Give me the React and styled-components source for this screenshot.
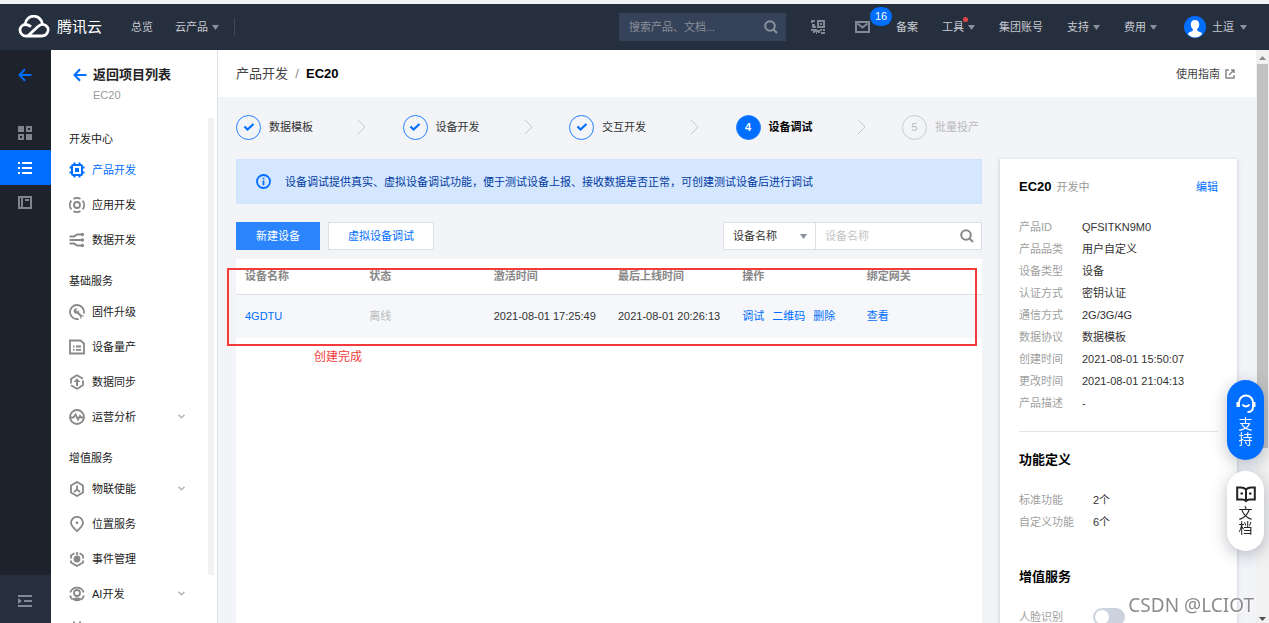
import styled, { createGlobalStyle } from "styled-components";

const steps = [
  { label: "数据模板", state: "done" },
  { label: "设备开发", state: "done" },
  { label: "交互开发", state: "done" },
  { label: "设备调试", state: "active" },
  { label: "批量投产", state: "todo" },
];

const menu = [
  {
    title: "开发中心",
    items: [
      { label: "产品开发", icon: "chip", active: true },
      { label: "应用开发", icon: "app" },
      { label: "数据开发", icon: "flow" },
    ],
  },
  {
    title: "基础服务",
    items: [
      { label: "固件升级", icon: "wrench" },
      { label: "设备量产", icon: "list" },
      { label: "数据同步", icon: "sync" },
      { label: "运营分析", icon: "pulse", more: true },
    ],
  },
  {
    title: "增值服务",
    items: [
      { label: "物联使能", icon: "hex", more: true },
      { label: "位置服务", icon: "pin" },
      { label: "事件管理", icon: "event" },
      { label: "AI开发", icon: "ai", more: true },
      { label: "工作空间", icon: "work" },
    ],
  },
];

const info = [
  ["产品ID", "QFSITKN9M0"],
  ["产品品类", "用户自定义"],
  ["设备类型", "设备"],
  ["认证方式", "密钥认证"],
  ["通信方式", "2G/3G/4G"],
  ["数据协议", "数据模板"],
  ["创建时间", "2021-08-01 15:50:07"],
  ["更改时间", "2021-08-01 21:04:13"],
  ["产品描述", "-"],
];

const icons = {
  chip: (
    <>
      <rect x="3" y="3" width="10" height="10" rx="1" strokeWidth="2" />
      <path d="M5.5 0.5V3M10.5 0.5V3M5.5 13v2.5M10.5 13v2.5M0.5 5.5H3M0.5 10.5H3M13 5.5h2.5M13 10.5h2.5" strokeWidth="2" />
      <rect x="6" y="6" width="4" height="4" fill="currentColor" stroke="none" />
    </>
  ),
  app: (
    <>
      <circle cx="8" cy="8" r="3" />
      <path d="M4.5 1.9a7 7 0 0 1 7 0M4.5 14.1a7 7 0 0 0 7 0M2.4 3.6a7 7 0 0 0 0 8.8M13.6 3.6a7 7 0 0 1 0 8.8" />
    </>
  ),
  flow: (
    <>
      <path d="M0.5 4.5h4c2 0 2-2 4-2H13M0.5 8H13M0.5 11.5h4c2 0 2 2 4 2H13" />
      <circle cx="13.4" cy="2.5" r="1.7" fill="currentColor" stroke="none" />
      <circle cx="13.4" cy="8" r="1.7" fill="currentColor" stroke="none" />
      <circle cx="13.4" cy="13.5" r="1.7" fill="currentColor" stroke="none" />
    </>
  ),
  wrench: (
    <>
      <path d="M9.6 14.8A7 7 0 1 1 14.8 9.6M11.4 14.2l.8-.4M13.8 12.2l.5-.8" />
      <path d="M8.6 4.6a2.7 2.7 0 0 0-3.8 3.5 2.7 2.7 0 0 0 3.4 1.4l3.9 3.9 1.5-1.5-3.9-3.9a2.7 2.7 0 0 0 .2-2L8.2 7.6 6.8 6.3z" fill="currentColor" stroke="none" />
    </>
  ),
  list: (
    <>
      <path d="M1 1.5h10.5L15 4.5v10H1z" />
      <path d="M4 7.5h1.5M7 7.5h5M4 10.800h1.500M7 10.800h5" />
    </>
  ),
  sync: (
    <>
      <path d="M2 9.500V5l4-2.700L8 1.200l6 3.500M14 6.500V11l-4 2.700-2 1.100-6-3.500" />
      <path d="M8 12V6" strokeWidth="2" />
      <path d="M4.700 8L8 4.200 11.300 8z" fill="currentColor" stroke="none" />
    </>
  ),
  pulse: (
    <>
      <circle cx="8" cy="8" r="7" />
      <path d="M2 8.500h2.500l2-3 2.500 5 2-3.500 1 1.500h2" />
    </>
  ),
  hex: (
    <>
      <path d="M8 1l6 3.500v7L8 15l-6-3.500v-7z" />
      <path d="M8 4.500V8.500M8 8.500l-3 2.500M8 8.500l3 2.500" />
    </>
  ),
  pin: (
    <>
      <path d="M8 15.200C5 12.500 2 9.800 2 6.800a6 6 0 0 1 12 0c0 3-3 5.700-6 8.400z" />
      <circle cx="8" cy="6.800" r="1.400" fill="currentColor" stroke="none" />
    </>
  ),
  event: (
    <>
      <path d="M5.500 2.300L2 4.500v3M10.500 2.300L14 4.500v3M2 9.500v2L8 15l6-3.500v-2" />
      <circle cx="8" cy="8" r="3.400" fill="currentColor" stroke="none" />
      <path d="M8 1v3" />
    </>
  ),
  ai: (
    <>
      <path d="M1.300 6.500a7 7 0 0 1 13.400 0M1.200 9.500a7 7 0 0 0 2.300 4M14.800 9.500a7 7 0 0 1-2.300 4" />
      <circle cx="8" cy="7" r="3" />
      <path d="M3 13c3-2 7-2 10 0-2.500 3-7.500 3-10 0z" fill="currentColor" stroke="none" />
    </>
  ),
  work: <path d="M4 1.500h2M10 1.500h2M2 4h12v10H2z" />,
};

const Caret = () => (
  <svg width="7" height="5" viewBox="0 0 7 5" aria-hidden="true">
    <path d="M0 0h7L3.500 5z" fill="#8b919b" />
  </svg>
);

const BackArrow = () => (
  <svg width="14" height="14" viewBox="0 0 14 14" fill="none" stroke="#006eff" strokeWidth="2" aria-hidden="true">
    <path d="M13.500 7H2M7 1.200L1.500 7 7 12.800" />
  </svg>
);

const SearchGlyph = () => (
  <svg width="14" height="14" viewBox="0 0 14 14" fill="none" stroke="currentColor" strokeWidth="2" aria-hidden="true">
    <circle cx="6" cy="6" r="4.800" />
    <path d="M9.500 9.500l3.500 3.500" />
  </svg>
);

const Header = () => (
  <TopBar>
    <Brand href="#home">
      <svg width="32" height="24" viewBox="0 0 32 24" fill="none" stroke="#fff" strokeWidth="2.800" aria-hidden="true">
        <path d="M7.200 9A8.600 8.600 0 0 1 24.300 8.800" />
        <path d="M10 20.800L20 11.400c3-2.700 6-2.300 8-.8 2.500 2 2.600 5.300 1.200 7.500-1.200 1.900-3 2.900-5.200 2.900H8.500A6 6 0 0 1 2 15.200c0-3.200 2.500-5.700 5.700-5.700 1.900 0 3.600.7 5.300 2.200" />
      </svg>
      腾讯云
    </Brand>
    <TopLink href="#overview">总览</TopLink>
    <TopLink href="#products">
      云产品 <Caret />
    </TopLink>
    <Divider />
    <TopRight>
      <TopSearch>
        <input type="text" aria-label="搜索产品、文档" placeholder="搜索产品、文档..." />
        <SearchGlyph />
      </TopSearch>
      <IconButton aria-label="小程序">
        <svg width="14" height="14" viewBox="0 0 14 14" fill="none" stroke="#808a94" strokeWidth="2">
          <path d="M4 1H1v2M1 5h3M1 7h4M7 1h6v6H7zM0 10h3v3M5 9v2h3v2M9 10h2M13 9v2M10 13h4M5 13h1" />
          <path d="M10 3v2" />
        </svg>
      </IconButton>
      <IconButton aria-label="消息" $wide>
        <svg width="15" height="12" viewBox="0 0 15 12" fill="none" stroke="#808a94" strokeWidth="2">
          <path d="M1 1h13v10H1zM2.500 2.500l5 4 5-4" />
        </svg>
        <Badge>16</Badge>
      </IconButton>
      <TopLink href="#beian">备案</TopLink>
      <TopLink href="#tools">
        工具 <Caret />
        <Dot />
      </TopLink>
      <TopLink href="#group">集团账号</TopLink>
      <TopLink href="#support">
        支持 <Caret />
      </TopLink>
      <TopLink href="#cost">
        费用 <Caret />
      </TopLink>
      <UserLink href="#account">
        <svg width="22" height="22" viewBox="0 0 22 22" aria-hidden="true">
          <circle cx="11" cy="11" r="11" fill="#006eff" />
          <path d="M11 4c2.800 0 4.300 2 4.200 4.600-.1 2-.9 3.600-2 4.500v1.700c2 .9 4 1.500 5 3.200-2 2.400-4.500 3.500-7.200 3.500S5.800 20.400 3.800 18c1-1.700 3-2.300 5-3.200v-1.700c-1.100-.9-1.900-2.500-2-4.500C6.700 6 8.200 4 11 4z" fill="#fff" />
        </svg>
        土逗 <Caret />
      </UserLink>
    </TopRight>
  </TopBar>
);

const SideRail = () => (
  <Rail>
    <RailBack aria-label="返回">
      <BackArrow />
    </RailBack>
    <RailButton aria-label="概览">
      <svg width="14" height="14" viewBox="0 0 14 14" fill="none" stroke="#7d858f" strokeWidth="2">
        <path d="M0 0h6v6H0zM8 8h6v6H8z" fill="#7d858f" stroke="none" />
        <path d="M9 1h4v4H9zM1 9h4v4H1z" />
      </svg>
    </RailButton>
    <RailButton aria-label="项目列表" $active>
      <svg width="14" height="12" viewBox="0 0 14 12" stroke="#fff" strokeWidth="2">
        <path d="M0 1h2M4 1h10M0 6h2M4 6h10M0 11h2M4 11h10" />
      </svg>
    </RailButton>
    <RailButton aria-label="文档">
      <svg width="14" height="13" viewBox="0 0 14 13" fill="none" stroke="#7d858f" strokeWidth="2">
        <path d="M1 1h12v11H1zM4 1v11M7 4h4" />
      </svg>
    </RailButton>
    <RailBottom aria-label="展开菜单">
      <svg width="14" height="12" viewBox="0 0 14 12" stroke="#808a94" strokeWidth="2">
        <path d="M0 1h14M6 6h8M0 11h14" />
        <path d="M0 3v6l4-3z" fill="#808a94" stroke="none" />
      </svg>
    </RailBottom>
  </Rail>
);

const SideMenu = () => (
  <Sidebar>
    <ProjectLink href="#projects">
      <BackArrow />
      <div>
        <strong>返回项目列表</strong>
        <span>EC20</span>
      </div>
    </ProjectLink>
    <MenuScroll>
      <MenuList>
        {menu.map((group) => (
          <MenuGroup key={group.title}>
            <h2>{group.title}</h2>
            {group.items.map((item) => (
              <MenuItem key={item.label} href={`#${item.icon}`} $active={item.active}>
                <svg width="16" height="16" viewBox="0 0 16 16" fill="none" stroke="currentColor" strokeWidth="1.800" aria-hidden="true">
                  {icons[item.icon]}
                </svg>
                <span>{item.label}</span>
                {item.more && (
                  <svg width="7" height="5" viewBox="0 0 7 5" fill="none" stroke="#b5b5b5" strokeWidth="1.500" aria-hidden="true">
                    <path d="M.5.800l3 3 3-3" />
                  </svg>
                )}
              </MenuItem>
            ))}
          </MenuGroup>
        ))}
      </MenuList>
      <MenuThumb />
    </MenuScroll>
  </Sidebar>
);

const StepBar = () => (
  <Steps>
    {steps.map((step, i) => (
      <Step key={step.label} $state={step.state}>
        <StepCircle $state={step.state}>
          {step.state === "done" ? (
            <svg width="12" height="10" viewBox="0 0 12 10" fill="none" stroke="#006eff" strokeWidth="2.200">
              <path d="M1.500 4.500l3 3 6-5.500" />
            </svg>
          ) : (
            i + 1
          )}
        </StepCircle>
        {step.label}
        {i < steps.length - 1 && (
          <svg className="next" width="9" height="16" viewBox="0 0 9 16" fill="none" stroke="#c8c8c8">
            <path d="M.8.800L8 8 .8 15.200" />
          </svg>
        )}
      </Step>
    ))}
  </Steps>
);

const DeviceTable = () => (
  <TableBox>
    <Table>
      <thead>
        <tr>
          <th>设备名称</th>
          <th>状态</th>
          <th>激活时间</th>
          <th>最后上线时间</th>
          <th>操作</th>
          <th>绑定网关</th>
        </tr>
      </thead>
      <tbody>
        <tr>
          <td><a href="#device">4GDTU</a></td>
          <td className="offline">离线</td>
          <td>2021-08-01 17:25:49</td>
          <td>2021-08-01 20:26:13</td>
          <td>
            <Actions>
              <a href="#debug">调试</a>
              <a href="#qrcode">二维码</a>
              <a href="#delete">删除</a>
            </Actions>
          </td>
          <td><a href="#gateway">查看</a></td>
        </tr>
      </tbody>
    </Table>
    <MarkFrame />
    <MarkText>创建完成</MarkText>
  </TableBox>
);

const ProductCard = () => (
  <Card>
    <CardHead>
      <h2>EC20</h2>
      <span>开发中</span>
      <a href="#edit">编辑</a>
    </CardHead>
    <InfoList $label="63px">
      {info.map(([name, value]) => (
        <div key={name}>
          <dt>{name}</dt>
          <dd>{value}</dd>
        </div>
      ))}
    </InfoList>
    <Rule />
    <CardTitle>功能定义</CardTitle>
    <InfoList $label="74px" $spaced>
      <div>
        <dt>标准功能</dt>
        <dd>2个</dd>
      </div>
      <div>
        <dt>自定义功能</dt>
        <dd>6个</dd>
      </div>
    </InfoList>
    <CardTitle>增值服务</CardTitle>
    <SwitchRow>
      <label htmlFor="face">人脸识别</label>
      <Switch id="face" type="checkbox" role="switch" />
    </SwitchRow>
  </Card>
);

const App = () => {
  return (
    <Page>
      <GlobalStyle />
      <Header />
      <Body>
        <SideRail />
        <SideMenu />
        <Main>
          <Crumbs>
            <a href="#product">产品开发</a>
            <i>/</i>
            <strong>EC20</strong>
            <a className="guide" href="#guide">
              使用指南
              <svg width="10" height="10" viewBox="0 0 10 10" fill="none" stroke="#888" strokeWidth="1.500" aria-hidden="true">
                <path d="M4 1H1v8h8V6M6 1h3v3M9 1L4 6" />
              </svg>
            </a>
          </Crumbs>
          <Content>
            <StepBar />
            <Left>
              <Notice>
                <svg width="15" height="15" viewBox="0 0 15 15" fill="none" stroke="#006eff" strokeWidth="1.800" aria-hidden="true">
                  <circle cx="7.500" cy="7.500" r="6.500" />
                  <path d="M7.500 6.500v4.800M7.500 3.700v1.600" />
                </svg>
                设备调试提供真实、虚拟设备调试功能，便于测试设备上报、接收数据是否正常，可创建测试设备后进行调试
              </Notice>
              <Toolbar>
                <Button $primary>新建设备</Button>
                <Button>虚拟设备调试</Button>
                <Filter>
                  <SelectBox>
                    <select aria-label="搜索字段">
                      <option>设备名称</option>
                    </select>
                    <Caret />
                  </SelectBox>
                  <SearchBox>
                    <input type="text" aria-label="设备名称" placeholder="设备名称" />
                    <SearchGlyph />
                  </SearchBox>
                </Filter>
              </Toolbar>
              <DeviceTable />
            </Left>
            <ProductCard />
          </Content>
        </Main>
        <ScrollTrack>
          <svg width="7" height="4" viewBox="0 0 7 4"><path d="M0 4h7L3.500 0z" fill="#8b8b8b" /></svg>
          <ScrollThumb />
          <svg width="7" height="4" viewBox="0 0 7 4"><path d="M0 0h7L3.500 4z" fill="#505050" /></svg>
        </ScrollTrack>
      </Body>
      <Floating>
        <FloatButton $primary>
          <svg width="20" height="20" viewBox="0 0 20 20" fill="none" stroke="currentColor" strokeWidth="2">
            <path d="M3 13V8.500a7 7 0 0 1 14 0V13c0 3-2 5-5.500 5" />
            <path d="M1.500 8v5M18.500 8v5M6.500 10.500c1.500 2.500 5.500 2.500 7 0" />
          </svg>
          <span>支持</span>
        </FloatButton>
        <FloatButton>
          <svg width="20" height="17" viewBox="0 0 20 17" fill="none" stroke="currentColor" strokeWidth="2">
            <path d="M10 3.500C8.500 2 7 1.500 5 1.500H1.200v12H6c1.800 0 3 .5 4 1.500 1-1 2.200-1.500 4-1.500h4.800v-12H15c-2 0-3.500.5-5 2zM10 3.500v11M4.500 7.500h2.500M13 7.500h2.500" />
          </svg>
          <span>文档</span>
        </FloatButton>
      </Floating>
      <Watermark>CSDN @LCIOT</Watermark>
    </Page>
  );
};

const GlobalStyle = createGlobalStyle`
  * {
    box-sizing: border-box;
  }
  body {
    margin: 0;
    font-family: "Liberation Sans", "Noto Sans CJK SC", sans-serif;
    font-size: 11px;
    line-height: 22px;
    color: #333;
  }
  h2, h3, dl, dd {
    margin: 0;
    font-size: inherit;
  }
  a {
    color: #006eff;
    text-decoration: none;
  }
  button, input, select {
    font: inherit;
    color: inherit;
    margin: 0;
  }
  svg {
    flex: none;
    display: block;
  }
`;

const Page = styled.div`
  display: flex;
  flex-direction: column;
  height: 100vh;
  overflow: hidden;
  border-top: 4px solid #f1f2f2;
`;

const TopBar = styled.header`
  flex: none;
  display: flex;
  align-items: center;
  height: 46px;
  padding: 0 22px 0 18px;
  background: #262f3e;
`;

const Brand = styled.a`
  display: flex;
  align-items: center;
  gap: 7px;
  margin-right: 29px;
  font-size: 15px;
  color: #fff;
`;

const TopLink = styled.a`
  position: relative;
  display: flex;
  align-items: center;
  gap: 4px;
  color: #c6cad0;
  white-space: nowrap;

  & + & {
    margin-left: 22px;
  }
`;

const UserLink = styled(TopLink)`
  gap: 6px;
`;

const Divider = styled.span`
  width: 1px;
  height: 18px;
  margin-left: 15px;
  background: #3f4855;
`;

const TopRight = styled.div`
  display: flex;
  align-items: center;
  margin-left: auto;

  ${TopLink} + ${TopLink} {
    margin-left: 24px;
  }
  ${TopLink} + ${UserLink} {
    margin-left: 27px;
  }
`;

const TopSearch = styled.div`
  display: flex;
  align-items: center;
  width: 167px;
  height: 28px;
  padding: 0 8px 0 10px;
  margin-right: 25px;
  background: #354259;
  color: #8a929d;

  input {
    flex: 1;
    min-width: 0;
    padding: 0;
    border: none;
    background: transparent;

    &::placeholder {
      color: #8a8f98;
    }
  }
`;

const IconButton = styled.button`
  position: relative;
  padding: 0;
  margin-right: ${(props) => (props.$wide ? "26px" : "30px")};
  border: none;
  background: transparent;
`;

const Badge = styled.span`
  position: absolute;
  left: 15px;
  bottom: 7px;
  width: 22px;
  height: 19px;
  border-radius: 10px;
  background: #006eff;
  color: #fff;
  line-height: 19px;
  text-align: center;
`;

const Dot = styled.i`
  position: absolute;
  top: 1px;
  left: 21px;
  width: 5px;
  height: 5px;
  border-radius: 50%;
  background: #e54545;
`;

const Body = styled.div`
  flex: 1;
  display: flex;
  min-height: 0;
`;

const Rail = styled.nav`
  flex: none;
  display: flex;
  flex-direction: column;
  width: 51px;
  background: #1e222d;
`;

const RailButton = styled.button`
  display: flex;
  align-items: center;
  justify-content: center;
  height: 35px;
  padding: 0 2px 0 0;
  border: none;
  background: ${(props) => (props.$active ? "#006eff" : "transparent")};
`;

const RailBack = styled(RailButton)`
  height: 50px;
  margin-bottom: 15px;
`;

const RailBottom = styled(RailButton)`
  height: 48px;
  padding-top: 4px;
  margin-top: auto;
  background: #262f3e;
`;

const Sidebar = styled.aside`
  flex: none;
  display: flex;
  flex-direction: column;
  width: 167px;
  border-right: 1px solid #dcdfe6;
  background: #fff;
`;

const ProjectLink = styled.a`
  flex: none;
  display: flex;
  gap: 6px;
  height: 68px;
  padding: 14px 0 0 22px;

  svg {
    margin-top: 4px;
  }
  strong, span {
    display: block;
  }
  strong {
    font-size: 13px;
    line-height: 22px;
    color: #222;
  }
  span {
    line-height: 18px;
    color: #999;
  }
`;

const MenuScroll = styled.div`
  flex: 1;
  display: flex;
  min-height: 0;
  padding-right: 3px;
`;

const MenuList = styled.div`
  flex: 1;
  padding: 9px 23px 0 18px;
  overflow: hidden;
`;

const MenuThumb = styled.div`
  width: 6px;
  height: 457px;
  background: #f2f2f2;
`;

const MenuGroup = styled.section`
  margin-bottom: 12px;

  h2 {
    font-weight: 400;
    line-height: 25px;
    color: #222;
  }
`;

const MenuItem = styled.a`
  display: flex;
  align-items: center;
  gap: 7px;
  height: 35px;
  color: ${(props) => (props.$active ? "#006eff" : "#888")};

  span {
    flex: 1;
    color: ${(props) => (props.$active ? "#006eff" : "#222")};
  }
`;

const Main = styled.main`
  flex: 1;
  display: flex;
  flex-direction: column;
  min-width: 0;
  background: #f2f4f8;
`;

const Crumbs = styled.div`
  flex: none;
  display: flex;
  align-items: center;
  height: 47px;
  padding: 0 21px 0 18px;
  background: #fff;
  font-size: 13px;

  a {
    color: #444;
  }
  i {
    width: 18px;
    text-align: center;
    font-style: normal;
    color: #888;
  }
  strong {
    color: #000;
  }
  .guide {
    display: flex;
    align-items: center;
    gap: 5px;
    margin-left: auto;
    font-size: 11px;
  }
`;

const Content = styled.div`
  flex: 1;
  display: grid;
  grid-template-columns: minmax(0, 1fr) 237px;
  grid-template-rows: 62px minmax(0, 1fr);
  column-gap: 18px;
  min-height: 0;
  padding: 0 19px 0 18px;
`;

const Steps = styled.ol`
  grid-column: 1 / -1;
  display: flex;
  align-items: center;
  margin: 0 255px 0 0;
  padding: 0 0 2px;
  list-style: none;
`;

const Step = styled.li`
  flex: 1;
  display: flex;
  align-items: center;
  gap: 8px;
  font-weight: ${(props) => (props.$state === "active" ? 700 : 400)};
  color: ${(props) => (props.$state === "todo" ? "#bbb" : props.$state === "active" ? "#000" : "#333")};

  &:last-child {
    flex: none;
    width: 80px;
  }
  .next {
    margin: 0 auto;
  }
`;

const StepCircle = styled.span`
  flex: none;
  display: flex;
  align-items: center;
  justify-content: center;
  width: 25px;
  height: 25px;
  border: 1px solid ${(props) => (props.$state === "todo" ? "#ccc" : "#2580ff")};
  border-radius: 50%;
  background: ${(props) => (props.$state === "active" ? "#006eff" : "transparent")};
  color: ${(props) => (props.$state === "active" ? "#fff" : "#bbb")};
`;

const Left = styled.div`
  display: flex;
  flex-direction: column;
  min-height: 0;
`;

const Notice = styled.div`
  display: flex;
  align-items: center;
  gap: 14px;
  height: 45px;
  padding: 0 19px;
  border: 1px solid #cfe2ff;
  background: #d5e7ff;
  color: #003b9f;
`;

const Toolbar = styled.div`
  display: flex;
  gap: 8px;
  margin: 18px 0 9px;
`;

const Button = styled.button`
  height: 28px;
  padding: 0 19px;
  border: 1px solid ${(props) => (props.$primary ? "#2a85ff" : "#dcdfe6")};
  background: ${(props) => (props.$primary ? "#2a85ff" : "#fff")};
  color: ${(props) => (props.$primary ? "#fff" : "#006eff")};
`;

const Filter = styled.div`
  display: flex;
  width: 259px;
  height: 28px;
  margin-left: auto;
  border: 1px solid #dcdfe6;
  background: #fff;
`;

const SelectBox = styled.div`
  flex: none;
  display: flex;
  align-items: center;
  width: 92px;
  padding-right: 8px;
  border-right: 1px solid #dcdfe6;

  select {
    flex: 1;
    min-width: 0;
    padding: 0 0 0 9px;
    border: none;
    background: transparent;
    appearance: none;
  }
`;

const SearchBox = styled.div`
  flex: 1;
  display: flex;
  align-items: center;
  min-width: 0;
  padding: 0 7px 0 9px;
  color: #888;

  input {
    flex: 1;
    min-width: 0;
    padding: 0;
    border: none;

    &::placeholder {
      color: #c4c4c4;
    }
  }
`;

const TableBox = styled.div`
  position: relative;
  flex: 1;
  background: #fff;
`;

const Table = styled.table`
  width: 100%;
  table-layout: fixed;
  border-collapse: collapse;

  th, td {
    padding: 0 0 0 9px;
    text-align: left;
    white-space: nowrap;
  }
  th {
    height: 35px;
    border-bottom: 1px solid #dcdfe6;
    color: #888;
  }
  td {
    height: 44px;
    background: #f5f7fa;
  }
  .offline {
    color: #bbb;
  }
`;

const Actions = styled.div`
  display: flex;
  gap: 8px;
`;

/* hand-drawn highlight around the new device row */
const MarkFrame = styled.div`
  position: absolute;
  top: 9px;
  left: -9px;
  right: 5px;
  height: 78px;
  border: 2px solid #f23c3c;
`;

const MarkText = styled.span`
  position: absolute;
  top: 87px;
  left: 78px;
  font-size: 12px;
  color: #f23c3c;
`;

const Card = styled.aside`
  padding: 17px 19px 0;
  background: #fff;
  box-shadow: 0 1px 4px rgba(54, 58, 80, 0.25);
`;

const CardHead = styled.div`
  display: flex;
  align-items: center;
  gap: 5px;
  margin-bottom: 18px;

  h2 {
    font-size: 13px;
    color: #000;
  }
  span {
    color: #999;
  }
  a {
    margin-left: auto;
  }
`;

const InfoList = styled.dl`
  margin-bottom: ${(props) => (props.$spaced ? "33px" : "17px")};

  div {
    display: grid;
    grid-template-columns: ${(props) => props.$label} 1fr;
  }
  dt {
    color: #a0a0a0;
  }
`;

const Rule = styled.hr`
  height: 1px;
  margin: 0 0 17px;
  border: none;
  background: #e5e5e5;
`;

const CardTitle = styled.h3`
  margin-bottom: 18px;
  font-size: 13px;
  color: #000;
`;

const SwitchRow = styled.div`
  display: grid;
  grid-template-columns: 74px 1fr;
  align-items: center;
  color: #a0a0a0;
`;

const Switch = styled.input`
  appearance: none;
  width: 32px;
  height: 18px;
  border-radius: 9px;
  background: #cdd3de;

  &::before {
    content: "";
    display: block;
    width: 14px;
    height: 14px;
    margin: 2px;
    border-radius: 50%;
    background: #fff;
  }
`;

const ScrollTrack = styled.div`
  flex: none;
  display: flex;
  flex-direction: column;
  align-items: center;
  width: 13px;
  padding: 6px 0 2px;
  background: #f1f1f1;
`;

const ScrollThumb = styled.div`
  width: 11px;
  height: 384px;
  margin: 4px 0 auto;
  background: #c1c1c1;
`;

const Floating = styled.div`
  position: fixed;
  right: 5px;
  bottom: 72px;
  display: flex;
  flex-direction: column;
  gap: 11px;
`;

const FloatButton = styled.button`
  display: flex;
  flex-direction: column;
  align-items: center;
  justify-content: center;
  gap: 3px;
  width: 37px;
  height: 80px;
  padding: 0;
  border: none;
  border-radius: 19px;
  background: ${(props) => (props.$primary ? "#006eff" : "#fff")};
  color: ${(props) => (props.$primary ? "#fff" : "#222")};
  box-shadow: 0 4px 16px rgba(54, 58, 80, 0.32);

  span {
    width: 14px;
    font-size: 14px;
    line-height: 15px;
  }
`;

const Watermark = styled.div`
  position: fixed;
  right: 15px;
  bottom: 4px;
  font-family: "Noto Sans", sans-serif;
  font-size: 19px;
  line-height: 28px;
  color: #8c8c8c;
  text-shadow: 1px 1px 0 #fff;
`;

export default App;
